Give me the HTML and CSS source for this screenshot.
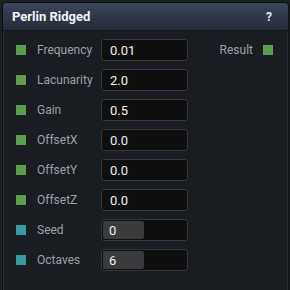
FILE: index.html
```html
<!DOCTYPE html>
<html>
<head>
<meta charset="utf-8">
<link rel="stylesheet" href="styles.css">
</head>
<body>
<div class="win">
  <div class="title">
    <span class="title-text">Perlin Ridged</span>
    <span class="help">?</span>
  </div>
  <div class="content">
    <div class="rows">
      <div class="row"><span class="pin green"></span><span class="label">Frequency</span><div class="field">0.01</div></div>
      <div class="row"><span class="pin green"></span><span class="label">Lacunarity</span><div class="field">2.0</div></div>
      <div class="row"><span class="pin green"></span><span class="label">Gain</span><div class="field">0.5</div></div>
      <div class="row"><span class="pin green"></span><span class="label">OffsetX</span><div class="field">0.0</div></div>
      <div class="row"><span class="pin green"></span><span class="label">OffsetY</span><div class="field">0.0</div></div>
      <div class="row"><span class="pin green"></span><span class="label">OffsetZ</span><div class="field">0.0</div></div>
      <div class="row"><span class="pin teal"></span><span class="label">Seed</span><div class="field slider"><div class="fill">0</div></div></div>
      <div class="row"><span class="pin teal"></span><span class="label">Octaves</span><div class="field slider"><div class="fill">6</div></div></div>
    </div>
    <div class="outputs">
      <div class="row out"><span class="label">Result</span><span class="pin green"></span></div>
    </div>
  </div>
</div>
</body>
</html>
```
FILE: styles.css
```css
html, body {
  margin: 0;
  padding: 0;
  background: #1b1e22;
  width: 290px;
  height: 290px;
  overflow: hidden;
}
body {
  font-family: Roboto, "Noto Sans", sans-serif;
  padding: 2px 1px 0 2px;
  box-sizing: border-box;
}
.win {
  height: 295px;
  border: 1px solid #0c0e11;
  border-radius: 4px;
  background: #191c21;
  box-shadow: inset 0 0 0 1px #2a2f38;
  overflow: hidden;
}
.title {
  height: 27px;
  display: flex;
  align-items: center;
  justify-content: space-between;
  padding: 0 16px 0 9px;
  background: linear-gradient(to bottom, #3d475b 0%, #2f3848 50%, #252c38 100%);
  border-bottom: 1px solid #11141a;
  border-radius: 3px 3px 0 0;
}
.title-text {
  color: #f2f4f7;
  font-weight: bold;
  font-size: 13px;
}
.help {
  color: #e8eaee;
  font-weight: bold;
  font-size: 12px;
}
.content {
  display: flex;
  justify-content: space-between;
  padding: 4px 15px 0 13px;
}
.rows {
  display: flex;
  flex-direction: column;
}
.row {
  height: 30px;
  display: flex;
  align-items: center;
}
.pin {
  width: 10px;
  height: 10px;
  flex: none;
}
.green { background: #5c9e4c; }
.teal { background: #3a9aa3; }
.label {
  color: #9ba1a9;
  font-size: 12px;
  margin-left: 11px;
  width: 64px;
  white-space: nowrap;
}
.field {
  width: 77px;
  height: 20px;
  border: 1px solid #35373a;
  border-radius: 3px;
  background: #0f0f10;
  color: #f0f0f0;
  font-size: 13px;
  display: flex;
  align-items: center;
  padding-left: 8px;
  box-sizing: content-box;
}
.field.slider {
  padding-left: 0;
  width: 85px;
}
.fill {
  width: 35px;
  height: 18px;
  margin-left: 1px;
  background: #3b3b3d;
  border-radius: 2px;
  padding-left: 6px;
  display: flex;
  align-items: center;
}
.out .label {
  width: auto;
  margin: 0 10px 0 0;
}
```
